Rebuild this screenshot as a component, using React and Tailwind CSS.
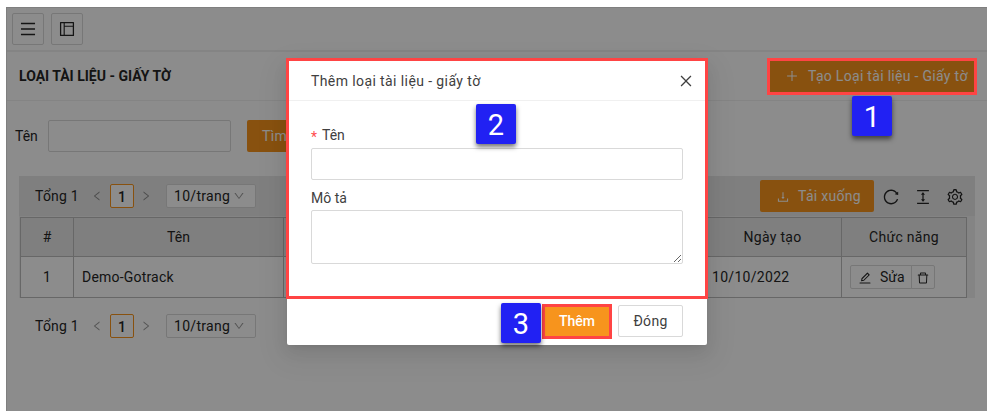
import React from "react";
import {
  AiOutlineMenu,
  AiOutlineLayout,
  AiOutlinePlus,
  AiOutlineDownload,
  AiOutlineReload,
  AiOutlineColumnHeight,
  AiOutlineSetting,
  AiOutlineEdit,
  AiOutlineDelete,
  AiOutlineClose,
  AiOutlineLeft,
  AiOutlineRight,
  AiOutlineDown,
} from "react-icons/ai";

function IconButton({ children }) {
  return (
    <button className="flex h-8 w-8 items-center justify-center rounded-xs border border-[#d9d9d9] bg-white">
      {children}
    </button>
  );
}

function Pagination() {
  return (
    <div className="flex h-6 items-center">
      <span className="w-[56px] tracking-[0.2px]">Tổng 1</span>
      <AiOutlineLeft className="h-3 w-3 text-black/40" />
      <span className="ml-[7px] flex h-6 w-6 items-center justify-center rounded-xs border border-[#f7941d] bg-white pt-px font-medium">
        1
      </span>
      <AiOutlineRight className="ml-[6px] h-3 w-3 text-black/40" />
      <div className="ml-[14px] flex h-6 w-[90px] items-center justify-between rounded-xs border border-[#d9d9d9] bg-white pr-[10px] pl-[7px]">
        <span className="tracking-[0.3px]">10/trang</span>
        <AiOutlineDown className="h-3 w-3 text-black/40" />
      </div>
    </div>
  );
}

function DataTable() {
  const cell = "border-r border-b border-[#bcbcbc]";
  return (
    <div className="flex h-[82px] bg-[#f0f0f0] pl-px">
      <div className="mt-px grid h-[81px] w-[947px] grid-cols-[53px_210px_420px_138px_125px] grid-rows-[39px_41px] border-t border-l border-[#bcbcbc] bg-white">
        <div className={`${cell} flex items-center justify-center bg-[#e8e8e8]`}>#</div>
        <div className={`${cell} flex items-center justify-center bg-[#e8e8e8]`}>Tên</div>
        <div className={`${cell} flex items-center justify-center bg-[#e8e8e8]`}>Mô tả</div>
        <div className={`${cell} flex items-center justify-center bg-[#e8e8e8] tracking-[0.3px]`}>Ngày tạo</div>
        <div className={`${cell} flex items-center justify-center bg-[#e8e8e8] tracking-[0.3px]`}>Chức năng</div>
        <div className={`${cell} flex items-center justify-center`}>1</div>
        <div className={`${cell} flex items-center pl-2 tracking-[0.2px]`}>Demo-Gotrack</div>
        <div className={cell} />
        <div className={`${cell} flex items-center pl-2 tracking-[0.3px]`}>10/10/2022</div>
        <div className={`${cell} flex items-center pl-2`}>
          <button className="flex h-6 w-[62px] items-center rounded-l-xs border border-[#d9d9d9] bg-white pl-[7px]">
            <AiOutlineEdit className="mt-0.5 h-[14px] w-[14px]" />
            <span className="ml-2">Sửa</span>
          </button>
          <button className="-ml-px flex h-6 w-6 items-center justify-center rounded-r-xs border border-[#d9d9d9] bg-white">
            <AiOutlineDelete className="mt-0.5 h-[14px] w-[14px]" />
          </button>
        </div>
      </div>
    </div>
  );
}

function Page() {
  return (
    <div className="h-full border-t border-l border-[#e8e8e8] bg-white">
      <header className="flex h-[44px] gap-[7px] border-b-2 border-[#f0f0f0] pt-[5px] pl-[5px]">
        <IconButton>
          <AiOutlineMenu className="h-[18px] w-[18px]" />
        </IconButton>
        <IconButton>
          <AiOutlineLayout className="h-[18px] w-[18px]" />
        </IconButton>
      </header>
      <div className="flex h-[49px] items-center justify-between border-b border-[#f0f0f0] pr-[13px] pl-3">
        <h1 className="text-[14px] font-bold">LOẠI TÀI LIỆU - GIẤY TỜ</h1>
        <button className="flex h-8 w-[204px] items-center bg-[#f7941d] pl-[15px] text-white">
          <AiOutlinePlus className="h-[14px] w-[14px]" />
          <span className="ml-[9px] whitespace-nowrap tracking-[0.3px]">Tạo Loại tài liệu - Giấy tờ</span>
        </button>
      </div>
      <div className="mt-[19px] flex h-8 items-center pl-2">
        <label className="w-[33px]">Tên</label>
        <input className="h-8 w-[183px] rounded-xs border border-[#d9d9d9] bg-white" />
        <button className="ml-4 h-8 w-[90px] rounded-xs bg-[#f7941d] pl-[15px] text-left tracking-[0.3px] text-white">
          Tìm kiếm
        </button>
      </div>
      <div className="mt-6 ml-3 w-[956px]">
        <div className="flex h-10 items-center bg-[#e8e8e8] pr-[11px] pl-4">
          <Pagination />
          <button className="ml-auto flex h-8 w-[114px] items-center rounded-xs bg-[#f7941d] pl-4 text-white">
            <AiOutlineDownload className="mt-0.5 h-[14px] w-[14px]" />
            <span className="ml-2 tracking-[0.3px]">Tải xuống</span>
          </button>
          <AiOutlineReload className="mt-0.5 ml-2 h-[18px] w-[18px]" />
          <AiOutlineColumnHeight className="mt-0.5 ml-[14px] h-[18px] w-[18px]" />
          <AiOutlineSetting className="mt-0.5 ml-[14px] h-[18px] w-[18px]" />
        </div>
        <DataTable />
        <div className="mt-4 pl-4">
          <Pagination />
        </div>
      </div>
    </div>
  );
}

function Modal() {
  return (
    <div className="absolute top-[54px] left-[281px] h-[284px] w-[420px] rounded-xs bg-white text-[#404040] shadow-[0_3px_6px_-4px_rgba(0,0,0,0.12),0_6px_16px_0_rgba(0,0,0,0.08),0_9px_28px_8px_rgba(0,0,0,0.05)]">
      <div className="flex h-10 items-center justify-between border-b border-[#f0f0f0] pr-[13px] pl-6">
        <h2 className="text-[14px] tracking-[0.4px]">Thêm loại tài liệu - giấy tờ</h2>
        <AiOutlineClose className="h-4 w-4" />
      </div>
      <div className="px-6 pt-[23px]">
        <label className="flex h-[22px] items-center">
          <span className="mt-1 mr-1 w-[7px] text-[#ff4d4f]">*</span>Tên
        </label>
        <input className="mt-[2px] block h-8 w-full rounded-xs border border-[#d9d9d9]" />
        <label className="mt-[7px] flex h-[22px] items-center">Mô tả</label>
        <textarea className="mt-[1px] block h-[54px] w-full resize-y rounded-xs border border-[#d9d9d9]" />
      </div>
      <div className="mt-[41px] flex h-8 justify-end gap-2 pr-6">
        <button className="w-[66px] bg-[#f7941d] font-medium text-white">Thêm</button>
        <button className="w-[65px] rounded-xs border border-[#d9d9d9] tracking-[0.3px]">Đóng</button>
      </div>
    </div>
  );
}

function Badge({ className, children }) {
  return (
    <div
      className={`absolute flex h-10 w-10 items-center justify-center rounded-xs bg-[#2121f3] pt-0.5 text-[29px] leading-none text-white shadow-[0_3px_5px_rgba(0,0,0,0.55)] ${className}`}
    >
      {children}
    </div>
  );
}

export default function App() {
  return (
    <div className="h-[418px] w-[993px] overflow-hidden bg-white pt-[7px] pl-[6px] font-['Roboto',sans-serif] text-[14px] leading-[22px] text-[#262626]">
      <div className="relative h-[404px] w-[981px]">
        <Page />
        <div className="absolute inset-0 bg-black/45" />
        <Modal />
        <div className="absolute top-[51px] left-[280px] h-[241px] w-[422px] border-3 border-[#ff4444]" />
        <div className="absolute top-[51px] left-[761px] h-[37px] w-[210px] border-3 border-[#ff4444]" />
        <div className="absolute top-[297px] left-[536px] h-[35px] w-[70px] border-3 border-[#ff4444]" />
        <Badge className="top-[89px] left-[846px]">1</Badge>
        <Badge className="top-[97px] left-[470px]">2</Badge>
        <Badge className="top-[296px] left-[495px]">3</Badge>
      </div>
    </div>
  );
}
